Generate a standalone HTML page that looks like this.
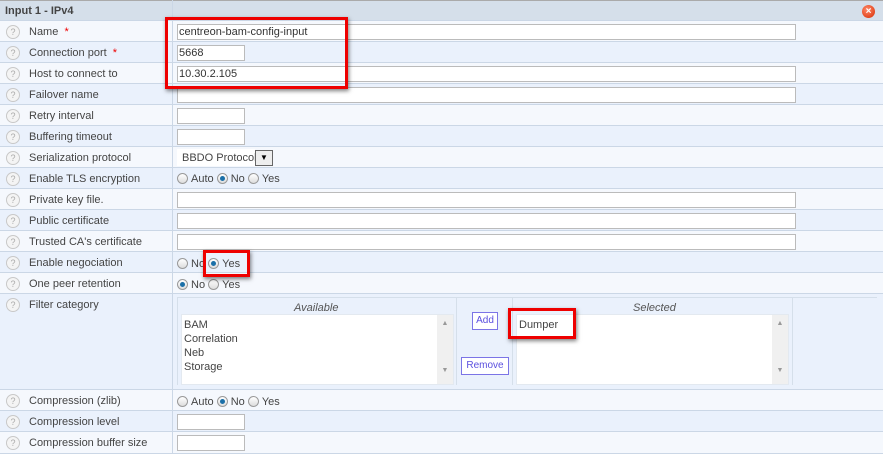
<!DOCTYPE html><html><head><style>
body{margin:0;width:883px;height:454px;overflow:hidden;background:#fff;font-family:"Liberation Sans",Arial,sans-serif;font-size:11px;color:#444;position:relative}
.r{position:absolute;left:0;width:883px;border-bottom:1px solid #cbd7e6;box-sizing:border-box}
.a{background:#f5f8fd}.b{background:#eaf1fc}
.q{position:absolute;left:6px;width:12px;height:12px;border:1px solid #c8c8c8;border-radius:50%;background:#f4f4f4;color:#aaa;font-size:9px;text-align:center;line-height:12px}
.l{position:absolute;left:29px}
.s{color:#e00}
.in{position:absolute;left:177px;height:16px;border:1px solid #bbb;background:#fff;box-sizing:border-box;font-size:11px;line-height:14px;padding-left:1px;color:#333}
.w{width:619px}.n{width:68px}
.vl{position:absolute;left:172px;top:0;width:1px;height:454px;background:#cbd7e6}
.rad{display:inline-block;width:11px;height:11px;border:1px solid #999;border-radius:50%;background:linear-gradient(#fff,#ddd);vertical-align:-2px;margin-right:3px;box-sizing:border-box;position:relative}
.on::after{content:"";position:absolute;left:2px;top:2px;width:5px;height:5px;border-radius:50%;background:#1a6fa8}
.rt{position:absolute;left:177px}
.red{position:absolute;border:3px solid #e00;box-shadow:1px 2px 4px rgba(0,0,0,.5)}
.list{position:absolute;background:#fff;border:1px solid #e3e9f0}
.sb{position:absolute;right:0;top:0;width:16px;height:100%;background:#f0f0f0;color:#999;font-size:7px;text-align:center}
.btn{position:absolute;border:1px solid #7b74e6;color:#5a4fdf;background:#fff;text-align:center;line-height:15px;font-size:10px}
</style></head><body>
<div class="r" style="top:0;height:21px;background:#d5dfea;border-top:1px solid #aaa"><span style="position:absolute;left:5px;top:4px;font-weight:bold;color:#444">Input 1 - IPv4</span>
<div style="position:absolute;left:862px;top:4px;width:13px;height:13px;border-radius:50%;background:radial-gradient(circle at 40% 35%,#ff8a6a,#d72a00);color:#fff;font-size:10px;font-weight:bold;text-align:center;line-height:13px">×</div></div>
<div class="r a" style="top:21px;height:21px"><div class="q" style="top:4px">?</div><span class="l" style="top:5px">Name &nbsp;<span class="s">*</span></span><div class="in w" style="top:3px">centreon-bam-config-input</div></div>
<div class="r b" style="top:42px;height:21px"><div class="q" style="top:4px">?</div><span class="l" style="top:5px">Connection port &nbsp;<span class="s">*</span></span><div class="in n" style="top:3px">5668</div></div>
<div class="r a" style="top:63px;height:21px"><div class="q" style="top:4px">?</div><span class="l" style="top:5px">Host to connect to</span><div class="in w" style="top:3px">10.30.2.105</div></div>
<div class="r b" style="top:84px;height:21px"><div class="q" style="top:4px">?</div><span class="l" style="top:5px">Failover name</span><div class="in w" style="top:3px"></div></div>
<div class="r a" style="top:105px;height:21px"><div class="q" style="top:4px">?</div><span class="l" style="top:5px">Retry interval</span><div class="in n" style="top:3px"></div></div>
<div class="r b" style="top:126px;height:21px"><div class="q" style="top:4px">?</div><span class="l" style="top:5px">Buffering timeout</span><div class="in n" style="top:3px"></div></div>
<div class="r a" style="top:147px;height:21px"><div class="q" style="top:4px">?</div><span class="l" style="top:5px">Serialization protocol</span><div style="position:absolute;left:177px;top:2px;width:78px;height:17px;background:#fff"></div><span class="rt" style="top:5px;left:182px;color:#444">BBDO Protocol</span><div style="position:absolute;left:255px;top:3px;width:16px;height:14px;border:1px solid #666;background:#eee;font-size:8px;text-align:center;line-height:14px;color:#000">▼</div></div>
<div class="r b" style="top:168px;height:21px"><div class="q" style="top:4px">?</div><span class="l" style="top:5px">Enable TLS encryption</span><span class="rt" style="top:5px"><span class="rad"></span>Auto <span class="rad on"></span>No <span class="rad"></span>Yes</span></div>
<div class="r a" style="top:189px;height:21px"><div class="q" style="top:4px">?</div><span class="l" style="top:5px">Private key file.</span><div class="in w" style="top:3px"></div></div>
<div class="r b" style="top:210px;height:21px"><div class="q" style="top:4px">?</div><span class="l" style="top:5px">Public certificate</span><div class="in w" style="top:3px"></div></div>
<div class="r a" style="top:231px;height:21px"><div class="q" style="top:4px">?</div><span class="l" style="top:5px">Trusted CA's certificate</span><div class="in w" style="top:3px"></div></div>
<div class="r b" style="top:252px;height:21px"><div class="q" style="top:4px">?</div><span class="l" style="top:5px">Enable negociation</span><span class="rt" style="top:6px"><span class="rad"></span>No <span class="rad on"></span>Yes</span></div>
<div class="r a" style="top:273px;height:21px"><div class="q" style="top:4px">?</div><span class="l" style="top:5px">One peer retention</span><span class="rt" style="top:6px"><span class="rad on"></span>No <span class="rad"></span>Yes</span></div>
<div class="r b" style="top:294px;height:96px"><div class="q" style="top:4px">?</div><span class="l" style="top:5px">Filter category</span>
<div style="position:absolute;left:177px;top:3px;width:700px;height:1px;background:#d5dfea"></div>
<div style="position:absolute;left:177px;top:4px;width:1px;height:87px;background:#d5dfea"></div>
<div style="position:absolute;left:456px;top:4px;width:1px;height:87px;background:#d5dfea"></div>
<div style="position:absolute;left:512px;top:4px;width:1px;height:87px;background:#d5dfea"></div>
<div style="position:absolute;left:792px;top:4px;width:1px;height:87px;background:#d5dfea"></div>
<i style="position:absolute;left:294px;top:8px;color:#555">Available</i>
<i style="position:absolute;left:633px;top:8px;color:#555">Selected</i>
<div class="list" style="left:181px;top:20px;width:271px;height:69px"><div style="padding:3px 0 0 2px;line-height:14px;font-size:11px">BAM<br>Correlation<br>Neb<br>Storage</div><div class="sb"><div style="margin-top:5px">▲</div><div style="margin-top:40px">▼</div></div></div>
<div class="list" style="left:516px;top:20px;width:271px;height:69px"><div style="padding:3px 0 0 2px;line-height:14px">Dumper</div><div class="sb"><div style="margin-top:5px">▲</div><div style="margin-top:40px">▼</div></div></div>
<div class="btn" style="left:472px;top:18px;width:24px;height:16px">Add</div>
<div class="btn" style="left:461px;top:63px;width:46px;height:16px">Remove</div>
</div>
<div class="r a" style="top:390px;height:21px"><div class="q" style="top:4px">?</div><span class="l" style="top:5px">Compression (zlib)</span><span class="rt" style="top:6px"><span class="rad"></span>Auto <span class="rad on"></span>No <span class="rad"></span>Yes</span></div>
<div class="r b" style="top:411px;height:21px"><div class="q" style="top:4px">?</div><span class="l" style="top:5px">Compression level</span><div class="in n" style="top:3px"></div></div>
<div class="r a" style="top:432px;height:22px"><div class="q" style="top:4px">?</div><span class="l" style="top:5px">Compression buffer size</span><div class="in n" style="top:3px"></div></div>
<div class="vl"></div>
<div class="red" style="left:165px;top:17px;width:177px;height:66px"></div>
<div class="red" style="left:203px;top:250px;width:41px;height:21px"></div>
<div class="red" style="left:508px;top:308px;width:62px;height:25px"></div>
</body></html>
